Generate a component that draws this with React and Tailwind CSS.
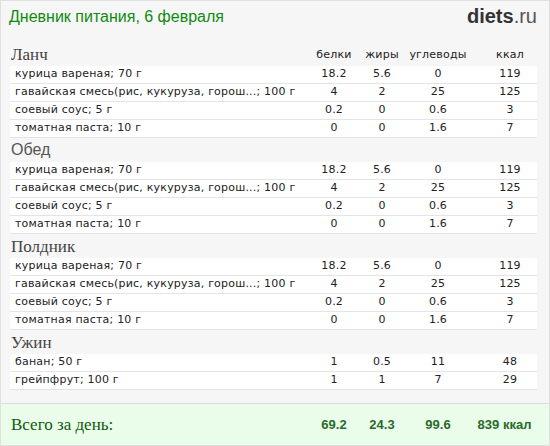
import React from "react";

const meals = [
  {
    title: "Ланч",
    serif: true,
    rows: [
      ["курица вареная; 70 г", "18.2", "5.6", "0", "119"],
      ["гавайская смесь(рис, кукуруза, горош...; 100 г", "4", "2", "25", "125"],
      ["соевый соус; 5 г", "0.2", "0", "0.6", "3"],
      ["томатная паста; 10 г", "0", "0", "1.6", "7"],
    ],
  },
  {
    title: "Обед",
    serif: false,
    rows: [
      ["курица вареная; 70 г", "18.2", "5.6", "0", "119"],
      ["гавайская смесь(рис, кукуруза, горош...; 100 г", "4", "2", "25", "125"],
      ["соевый соус; 5 г", "0.2", "0", "0.6", "3"],
      ["томатная паста; 10 г", "0", "0", "1.6", "7"],
    ],
  },
  {
    title: "Полдник",
    serif: true,
    rows: [
      ["курица вареная; 70 г", "18.2", "5.6", "0", "119"],
      ["гавайская смесь(рис, кукуруза, горош...; 100 г", "4", "2", "25", "125"],
      ["соевый соус; 5 г", "0.2", "0", "0.6", "3"],
      ["томатная паста; 10 г", "0", "0", "1.6", "7"],
    ],
  },
  {
    title: "Ужин",
    serif: true,
    rows: [
      ["банан; 50 г", "1", "0.5", "11", "48"],
      ["грейпфрут; 100 г", "1", "1", "7", "29"],
    ],
  },
];

const cols = "grid grid-cols-[1fr_52px_44px_68px_65px]";

const Meal = ({ meal, first }) => (
  <div>
    <div className={`${cols} h-[24px] items-center`}>
      <div
        className={
          meal.serif
            ? "pl-[1px] text-[17px] text-[#444] tracking-normal font-['Liberation_Serif',serif]"
            : "pl-[1px] text-[16px] text-[#555] tracking-normal font-['Liberation_Sans',sans-serif]"
        }
      >
        {meal.title}
      </div>
      {first && (
        <>
          <div className="text-center">белки</div>
          <div className="text-center">жиры</div>
          <div className="text-center">углеводы</div>
          <div className="text-center pl-[11px]">ккал</div>
        </>
      )}
    </div>
    {meal.rows.map((r, i) => (
      <div
        key={i}
        className={`${cols} h-[18px] items-center bg-white border-b border-[#e4e4e4]`}
      >
        <div className="pl-[5px] whitespace-nowrap">{r[0]}</div>
        <div className="text-center">{r[1]}</div>
        <div className="text-center">{r[2]}</div>
        <div className="text-center">{r[3]}</div>
        <div className="text-center pl-[11px]">{r[4]}</div>
      </div>
    ))}
  </div>
);

export default function App() {
  return (
    <div className="w-[550px] h-[446px] bg-[#f6f6f6] border border-[#e0e0e0] flex flex-col text-[11px] tracking-[0.2px] text-[#222] font-['DejaVu_Sans',sans-serif]">
      <div className="h-[41px] flex justify-between items-start pl-[8px] pr-[12px] pt-[4px]">
        <h1 className="text-[16px] tracking-normal text-[#108a10] font-['Liberation_Sans',sans-serif]">
          Дневник питания, 6 февраля
        </h1>
        <div className="text-[20px] tracking-normal font-['Liberation_Sans',sans-serif] leading-[22px]">
          <span className="font-bold text-[#333]">diets</span>
          <span className="text-[#555]">.ru</span>
        </div>
      </div>
      <div className="pl-[9px] pr-[12px]">
        {meals.map((m, i) => (
          <Meal key={i} meal={m} first={i === 0} />
        ))}
      </div>
      <div className="mt-auto h-[42px] bg-[#eafdea] border-t border-[#dcdcdc] pl-[9px] pr-[12px] grid grid-cols-[1fr_52px_44px_68px_65px] items-center tracking-normal">
        <div className="pl-[1px] text-[17px] text-[#0d5a0d] font-['Liberation_Serif',serif]">
          Всего за день:
        </div>
        <div className="text-center text-[13px] font-bold text-[#2b6a2b] font-['Liberation_Sans',sans-serif]">69.2</div>
        <div className="text-center text-[13px] font-bold text-[#2b6a2b] font-['Liberation_Sans',sans-serif]">24.3</div>
        <div className="text-center text-[13px] font-bold text-[#2b6a2b] font-['Liberation_Sans',sans-serif]">99.6</div>
        <div className="text-center text-[13px] font-bold text-[#2b6a2b] font-['Liberation_Sans',sans-serif]">839 ккал</div>
      </div>
    </div>
  );
}
